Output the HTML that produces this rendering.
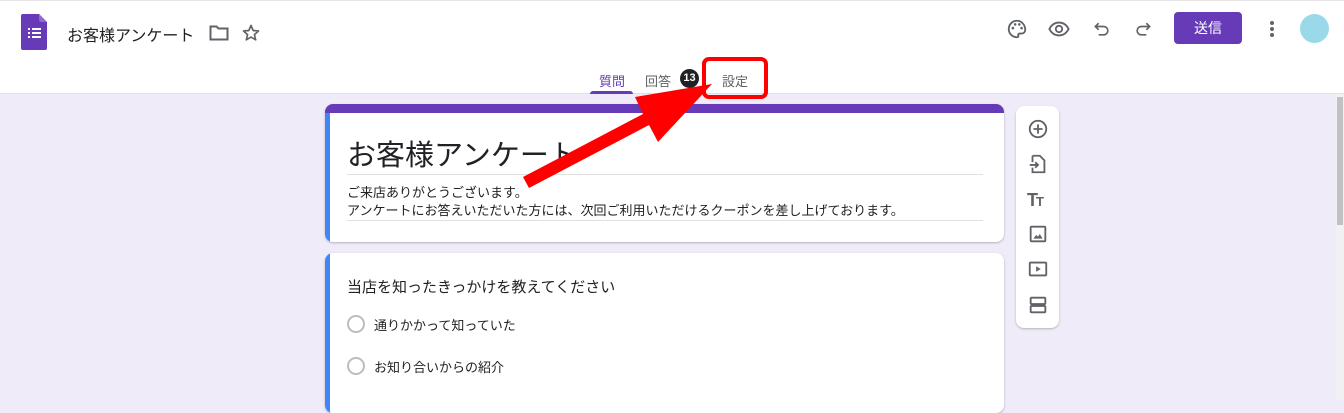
<!DOCTYPE html>
<html><head><meta charset="utf-8"><style>
*{box-sizing:border-box;margin:0;padding:0}
body{width:1344px;height:400px;overflow:hidden;background:#f0ebf8;font-family:"Liberation Sans","Noto Sans CJK JP",sans-serif;position:relative;color:#202124}
.hdr{position:absolute;left:0;top:0;width:1344px;height:94px;background:#fff;border-bottom:1px solid #e0e0e0;border-top:1px solid #e6e6e6}
.abs{position:absolute}
.card{position:absolute;background:#fff;border-radius:8px;box-shadow:0 1px 2px rgba(0,0,0,.25)}
.ic{position:absolute}
</style></head><body>
<div class="hdr">
  <svg class="ic" style="left:21px;top:13px" width="26" height="36" viewBox="0 0 26 36"><path d="M2 0h16l8 8v26a2 2 0 0 1-2 2H2a2 2 0 0 1-2-2V2a2 2 0 0 1 2-2z" fill="#673ab7"/><path d="M18 0l8 8h-6a2 2 0 0 1-2-2z" fill="#8e6acf"/><g fill="#fff"><rect x="7" y="14" width="2" height="2"/><rect x="11" y="14" width="9" height="2"/><rect x="7" y="18" width="2" height="2"/><rect x="11" y="18" width="9" height="2"/><rect x="7" y="22" width="2" height="2"/><rect x="11" y="22" width="9" height="2"/></g></svg>
  <div class="abs" style="left:67px;top:21px;font-size:16px;color:#202124">お客様アンケート</div>
  <svg class="ic" style="left:209px;top:24px" width="20" height="16" viewBox="0 0 20 16"><path d="M1.5 1.5h6l2 2h9v11h-17z" fill="none" stroke="#5f6368" stroke-width="2"/></svg>
  <svg class="ic" style="left:241px;top:22px" width="20" height="20" viewBox="0 0 24 24"><path d="M12 3l2.6 6 6.4.6-4.9 4.3 1.5 6.3L12 16.9 6.4 20.2l1.5-6.3L3 9.6 9.4 9z" fill="none" stroke="#5f6368" stroke-width="2" stroke-linejoin="round"/></svg>
  <svg class="ic" style="left:1006px;top:17px" width="22" height="22" viewBox="0 0 24 24"><path d="M12 3a9 9 0 0 0 0 18c1.2 0 1.8-.8 1.4-1.8-.5-1.1.2-2.2 1.4-2.2H17a4 4 0 0 0 4-4c0-5.5-4-10-9-10z" fill="none" stroke="#5f6368" stroke-width="2"/><circle cx="7.5" cy="11" r="1.4" fill="#5f6368"/><circle cx="10" cy="7" r="1.4" fill="#5f6368"/><circle cx="14.5" cy="7" r="1.4" fill="#5f6368"/><circle cx="17" cy="11" r="1.4" fill="#5f6368"/></svg>
  <svg class="ic" style="left:1048px;top:17px" width="22" height="22" viewBox="0 0 24 24"><path d="M1.5 12C4 7 8 5 12 5s8 2 10.5 7C20 17 16 19 12 19s-8-2-10.5-7z" fill="none" stroke="#5f6368" stroke-width="2"/><circle cx="12" cy="12" r="3.5" fill="none" stroke="#5f6368" stroke-width="2"/></svg>
  <svg class="ic" style="left:1092px;top:18px" width="20" height="20" viewBox="0 0 24 24"><path d="M8 5L4 9l4 4M4 9h10a5 5 0 0 1 0 10H8" fill="none" stroke="#5f6368" stroke-width="2"/></svg>
  <svg class="ic" style="left:1133px;top:18px" width="20" height="20" viewBox="0 0 24 24"><path d="M16 5l4 4-4 4M20 9H10a5 5 0 0 0 0 10h6" fill="none" stroke="#5f6368" stroke-width="2"/></svg>
  <div class="abs" style="left:1174px;top:11px;width:68px;height:32px;background:#673ab7;border-radius:4px;color:#fff;font-size:14px;text-align:center;line-height:32px">送信</div>
  <div class="abs" style="left:1270px;top:20px;width:4px;height:4px;border-radius:2px;background:#5f6368;box-shadow:0 6px 0 #5f6368,0 12px 0 #5f6368"></div>
  <div class="abs" style="left:1300px;top:13px;width:29px;height:29px;border-radius:50%;background:#9ad9ea"></div>
  <div class="abs" style="left:599px;top:70px;font-size:13px;color:#673ab7">質問</div>
  <div class="abs" style="left:590px;top:90px;width:43px;height:3px;background:#673ab7;border-radius:3px 3px 0 0"></div>
  <div class="abs" style="left:645px;top:70px;font-size:13px;color:#5f6368">回答</div>
  <div class="abs" style="left:680px;top:68px;width:19px;height:19px;border-radius:50%;background:#202124;color:#fff;font-size:11px;font-weight:bold;text-align:center;line-height:19px">13</div>
  <div class="abs" style="left:722px;top:70px;font-size:13px;color:#5f6368">設定</div>
</div>
<div class="abs" style="left:1336px;top:94px;width:8px;height:306px;background:#f1f1f1"></div>
<div class="abs" style="left:1337px;top:97px;width:6px;height:128px;background:#c1c1c1"></div>

<div class="card" style="left:325px;top:104px;width:679px;height:138px;overflow:hidden">
  <div class="abs" style="left:0;top:0;width:679px;height:9px;background:#673ab7"></div>
  <div class="abs" style="left:0;top:9px;width:5px;height:129px;background:#4285f4"></div>
  <div class="abs" style="left:22px;top:28px;font-size:29px;color:#202124">お客様アンケート</div>
  <div class="abs" style="left:22px;top:70px;width:636px;height:1px;background:#e0e0e0"></div>
  <div class="abs" style="left:22px;top:80px;font-size:13px;line-height:18px;color:#202124">ご来店ありがとうございます。<br>アンケートにお答えいただいた方には、次回ご利用いただけるクーポンを差し上げております。</div>
  <div class="abs" style="left:22px;top:116px;width:636px;height:1px;background:#e0e0e0"></div>
</div>
<div class="card" style="left:325px;top:253px;width:679px;height:160px;overflow:hidden">
  <div class="abs" style="left:0;top:0;width:5px;height:160px;background:#4285f4"></div>
  <div class="abs" style="left:22px;top:23px;font-size:15px">当店を知ったきっかけを教えてください</div>
  <div class="abs" style="left:22px;top:62px;width:18px;height:18px;border:2px solid #bdbdbd;border-radius:50%"></div>
  <div class="abs" style="left:49px;top:62px;font-size:13px">通りかかって知っていた</div>
  <div class="abs" style="left:22px;top:104px;width:18px;height:18px;border:2px solid #bdbdbd;border-radius:50%"></div>
  <div class="abs" style="left:49px;top:104px;font-size:13px">お知り合いからの紹介</div>
</div>
<div class="card" style="left:1016px;top:106px;width:43px;height:222px">
  <svg class="ic" style="left:11px;top:12px" width="22" height="22" viewBox="0 0 24 24"><circle cx="12" cy="12" r="9" fill="none" stroke="#5f6368" stroke-width="2"/><path d="M12 7v10M7 12h10" stroke="#5f6368" stroke-width="2"/></svg>
  <svg class="ic" style="left:11px;top:47px" width="22" height="22" viewBox="0 0 24 24"><path d="M6 3h8l5 5v13H6v-5M6 10V3" fill="none" stroke="#5f6368" stroke-width="2"/><path d="M3 13h9M9 10l3 3-3 3" fill="none" stroke="#5f6368" stroke-width="2"/></svg>
  <div class="abs" style="left:11px;top:84px;font-size:18px;font-weight:bold;color:#5f6368;letter-spacing:-2px">T<span style="font-size:13px">T</span></div>
  <svg class="ic" style="left:11px;top:117px" width="22" height="22" viewBox="0 0 24 24"><rect x="4" y="4" width="16" height="16" rx="1" fill="none" stroke="#5f6368" stroke-width="2"/><path d="M7 17l3-4 2 2 2-3 3 5z" fill="#5f6368"/></svg>
  <svg class="ic" style="left:11px;top:152px" width="22" height="22" viewBox="0 0 24 24"><rect x="3" y="5" width="18" height="14" rx="1" fill="none" stroke="#5f6368" stroke-width="2"/><path d="M10 9v6l5-3z" fill="#5f6368"/></svg>
  <svg class="ic" style="left:11px;top:188px" width="22" height="22" viewBox="0 0 24 24"><rect x="4" y="4" width="16" height="7" rx="1" fill="none" stroke="#5f6368" stroke-width="2"/><rect x="4" y="13" width="16" height="7" rx="1" fill="none" stroke="#5f6368" stroke-width="2"/></svg>
</div>

<svg class="abs" style="left:0;top:0" width="1344" height="400">
  <rect x="704" y="59" width="62" height="38" rx="5" fill="none" stroke="#ff0000" stroke-width="4"/>
  <polygon points="523,177 643,114 635,97 712,84 658,142 649,125 529,188" fill="#ff0000"/>
</svg>
</body></html>
